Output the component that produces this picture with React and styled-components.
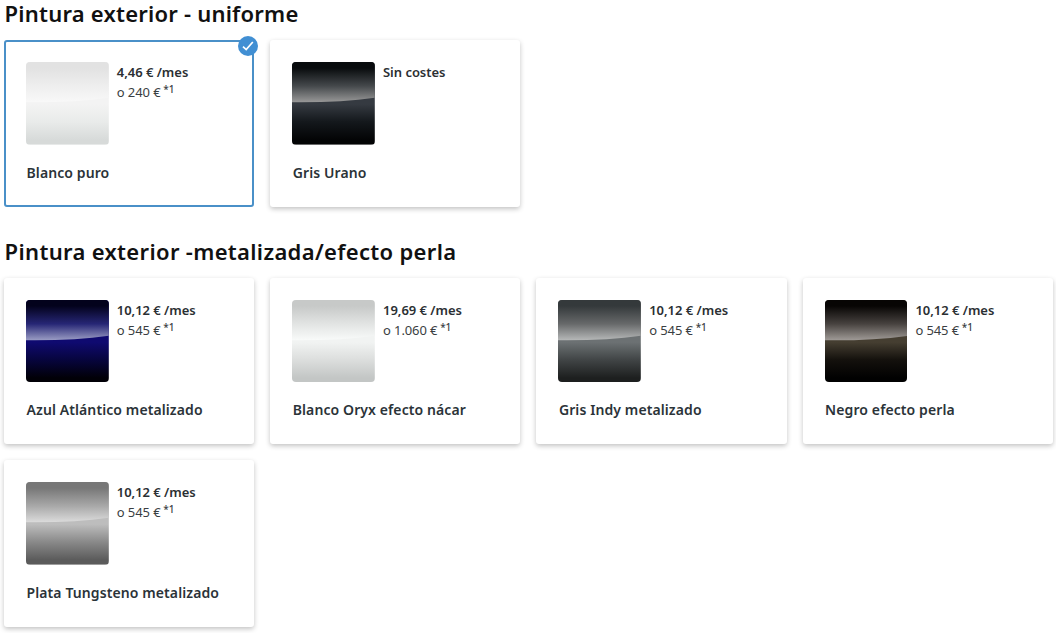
import React, { useId, useState } from "react";
import styled, { createGlobalStyle } from "styled-components";

const sections = [
    {
        title: "Pintura exterior - uniforme",
        spacing: "0.22px",
        paints: [
            {
                name: "Blanco puro",
                price: "4,46 € /mes",
                total: "o 240 €",
                top: ["#e2e2e2", "#eeeeee", "#f8f8f8"],
                bottom: ["#f3f3f3", "#e9ebea", "#d7dad9"],
            },
            {
                name: "Gris Urano",
                price: "Sin costes",
                top: ["#080b0d", "#44484b", "#969696"],
                bottom: ["#353a41", "#14181c", "#030405"],
            },
        ],
    },
    {
        title: "Pintura exterior -metalizada/efecto perla",
        spacing: "0.33px",
        paints: [
            {
                name: "Azul Atlántico metalizado",
                price: "10,12 € /mes",
                total: "o 545 €",
                top: ["#03021c", "#262675", "#9799c2"],
                bottom: ["#0f0a70", "#07053e", "#010007"],
            },
            {
                name: "Blanco Oryx efecto nácar",
                price: "19,69 € /mes",
                total: "o 1.060 €",
                top: ["#c7c9c8", "#e2e4e3", "#f8faf9"],
                bottom: ["#f1f3f2", "#dcdedd", "#c3c6c5"],
            },
            {
                name: "Gris Indy metalizado",
                price: "10,12 € /mes",
                total: "o 545 €",
                top: ["#34393b", "#67696a", "#b4b6b6"],
                bottom: ["#6c7173", "#414546", "#1d1f1f"],
            },
            {
                name: "Negro efecto perla",
                price: "10,12 € /mes",
                total: "o 545 €",
                top: ["#070504", "#47423f", "#9d9894"],
                bottom: ["#453e31", "#14110d", "#010101"],
            },
            {
                name: "Plata Tungsteno metalizado",
                price: "10,12 € /mes",
                total: "o 545 €",
                top: ["#777777", "#a8a8a8", "#dadada"],
                bottom: ["#bdbdbd", "#8a8a8a", "#5b5b5b"],
            },
        ],
    },
];

const App = () => {
    const [selected, setSelected] = useState("Blanco puro");

    return (
        <>
            <GlobalStyle />
            <Page>
                {sections.map((section) => (
                    <Section key={section.title}>
                        <Title $spacing={section.spacing}>{section.title}</Title>
                        <Grid>
                            {section.paints.map((paint) => (
                                <PaintCard
                                    key={paint.name}
                                    paint={paint}
                                    selected={paint.name === selected}
                                    onSelect={() => setSelected(paint.name)}
                                />
                            ))}
                        </Grid>
                    </Section>
                ))}
            </Page>
        </>
    );
};

export default App;

const PaintCard = ({ paint, selected, onSelect }) => {
    return (
        <Card $selected={selected} onClick={onSelect}>
            {selected && <CheckBadge />}
            <Summary>
                <Swatch top={paint.top} bottom={paint.bottom} />
                <Prices>
                    <Monthly>{paint.price}</Monthly>
                    {paint.total && (
                        <Total>
                            {paint.total} <Note>*1</Note>
                        </Total>
                    )}
                </Prices>
            </Summary>
            <Name>{paint.name}</Name>
        </Card>
    );
};

// Glossy sample: two gradients that meet on a curved reflection line
const Swatch = ({ top, bottom }) => {
    const id = useId();

    return (
        <SwatchSvg viewBox="0 0 83 83" preserveAspectRatio="none">
            <defs>
                <linearGradient id={id + "t"} gradientUnits="userSpaceOnUse" x1="0" y1="0" x2="0" y2="40">
                    <stop offset="0" stopColor={top[0]} />
                    <stop offset="0.15" stopColor={top[0]} />
                    <stop offset="0.6" stopColor={top[1]} />
                    <stop offset="1" stopColor={top[2]} />
                </linearGradient>
                <linearGradient id={id + "b"} gradientUnits="userSpaceOnUse" x1="0" y1="37" x2="0" y2="83">
                    <stop offset="0" stopColor={bottom[0]} />
                    <stop offset="0.12" stopColor={bottom[0]} />
                    <stop offset="0.5" stopColor={bottom[1]} />
                    <stop offset="0.9" stopColor={bottom[2]} />
                </linearGradient>
            </defs>
            <rect width="83" height="83" fill={`url(#${id}b)`} />
            <path d="M0 0H83V36Q48 41 0 40.5Z" fill={`url(#${id}t)`} />
        </SwatchSvg>
    );
};

const CheckBadge = () => (
    <Badge viewBox="0 0 20 20">
        <circle cx="10" cy="10" r="10" fill="#418fd3" />
        <path d="M5 10.6L8.2 13.6L14.8 6" fill="none" stroke="#fff" strokeWidth="1.7" />
    </Badge>
);

const GlobalStyle = createGlobalStyle`
    body {
        margin: 0;
        background: #fff;
        font-family: "Noto Sans", "Open Sans", sans-serif;
    }
`;

const Page = styled.main`
    box-sizing: border-box;
    height: 633px;
    padding: 0 3.2px 0 4px;
`;

const Section = styled.section`
    margin-bottom: 31px;
`;

const Title = styled.h2`
    margin: 0 0 0 0.6px;
    height: 40px;
    font-size: 22px;
    font-weight: 600;
    line-height: 27px;
    letter-spacing: ${(props) => props.$spacing};
    color: #111;
    white-space: nowrap;
`;

const Grid = styled.div`
    display: grid;
    grid-template-columns: repeat(4, 1fr);
    gap: 16px;
`;

const Card = styled.article`
    position: relative;
    box-sizing: border-box;
    height: 166.5px;
    padding: ${(props) => (props.$selected ? "20px" : "22px")};
    border: ${(props) => (props.$selected ? "2px solid #4a90c8" : "none")};
    border-radius: 3px;
    background: #fff;
    box-shadow: ${(props) => (props.$selected ? "none" : "0 2px 5px rgba(0, 0, 0, 0.24)")};
    cursor: pointer;
`;

const Badge = styled.svg`
    position: absolute;
    top: -6px;
    right: -6px;
    width: 20px;
    height: 20px;
`;

const Summary = styled.div`
    display: flex;
    gap: 8px;
`;

const SwatchSvg = styled.svg`
    flex: none;
    width: 82.8px;
    height: 82.6px;
    border-radius: 4px;
`;

const Prices = styled.div`
    font-size: 13px;
    line-height: 20px;
    white-space: nowrap;
    color: #2b2f33;
`;

const Monthly = styled.div`
    font-weight: 600;
    letter-spacing: -0.03px;
`;

const Total = styled.div`
    font-weight: 400;
    letter-spacing: -0.1px;
    color: #3a3e42;
`;

const Note = styled.sup`
    font-size: 10px;
    font-weight: 500;
    line-height: 0;
    vertical-align: 4px;
    margin-left: -0.5px;
`;

const Name = styled.div`
    margin: 18px 0 0 0.5px;
    font-size: 14px;
    font-weight: 600;
    line-height: 20px;
    letter-spacing: 0.1px;
    color: #2b3338;
    white-space: nowrap;
`;
